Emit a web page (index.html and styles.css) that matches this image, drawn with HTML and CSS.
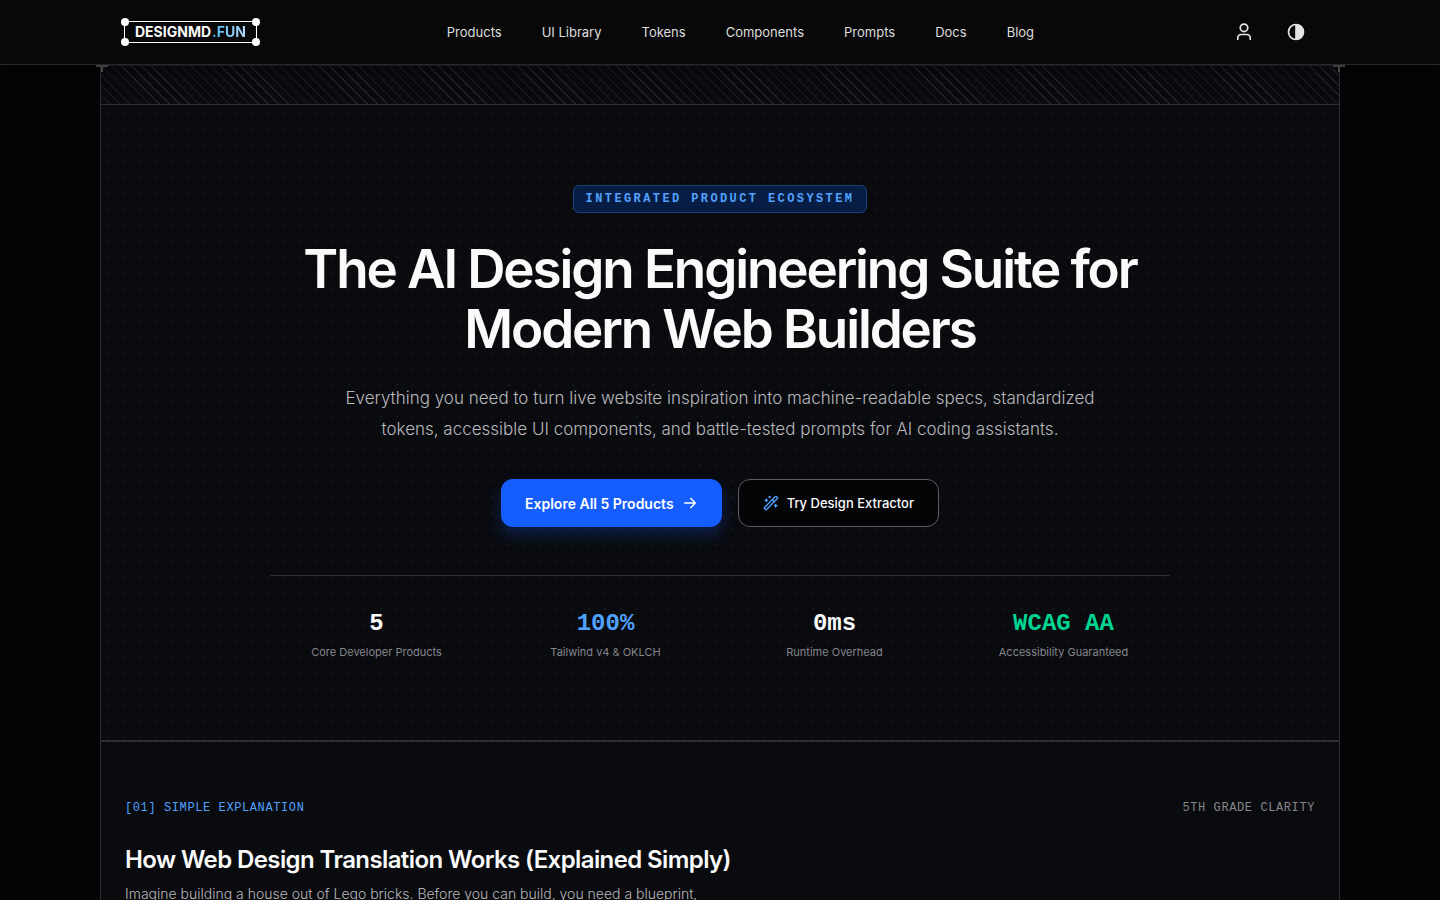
FILE: index.html
```html
<!DOCTYPE html>
<html lang="en">
  <head>
    <meta charset="UTF-8" />
    <meta name="viewport" content="width=device-width, initial-scale=1" />
    <title>DesignMD.fun - Products</title>
    <link rel="stylesheet" href="styles.css">
  </head>
  <body>
    <header class="header">
      <div class="header-inner">
        <a href="#" class="logo">
          <span class="logo-name">DESIGNMD</span><span class="logo-tld">.FUN</span>
          <i class="handle top-left"></i>
          <i class="handle top-right"></i>
          <i class="handle bottom-left"></i>
          <i class="handle bottom-right"></i>
        </a>
        <nav class="nav">
          <a href="#">Products</a>
          <a href="#">UI Library</a>
          <a href="#">Tokens</a>
          <a href="#">Components</a>
          <a href="#">Prompts</a>
          <a href="#">Docs</a>
          <a href="#">Blog</a>
        </nav>
        <div class="actions">
          <button type="button" class="icon-btn" aria-label="Account">
            <svg width="20" height="20" viewBox="0 0 24 24" fill="none" stroke="currentColor" stroke-width="2" stroke-linecap="round" stroke-linejoin="round">
              <circle cx="12" cy="7" r="4.5" />
              <path d="M4.5 21v-2a4 4 0 0 1 4-4h7a4 4 0 0 1 4 4v2" />
            </svg>
          </button>
          <button type="button" class="icon-btn" aria-label="Theme">
            <svg width="20" height="20" viewBox="0 0 24 24" fill="none" stroke="currentColor" stroke-width="2">
              <circle cx="12" cy="12" r="9" />
              <path d="M11 3h1a9 9 0 0 1 0 18h-1z" fill="currentColor" stroke="none" />
            </svg>
          </button>
        </div>
      </div>
    </header>

    <main class="frame">
      <i class="cross cross-left"></i>
      <i class="cross cross-right"></i>
      <div class="hatch"></div>

      <section class="hero">
        <span class="badge">INTEGRATED PRODUCT ECOSYSTEM</span>
        <h1>The AI Design Engineering Suite for Modern Web Builders</h1>
        <p class="lead">Everything you need to turn live website inspiration into machine-readable specs, standardized tokens, accessible UI components, and battle-tested prompts for AI coding assistants.</p>
        <div class="buttons">
          <a href="#" class="btn btn-primary">
            Explore All 5 Products
            <svg width="16" height="16" viewBox="0 0 24 24" fill="none" stroke="currentColor" stroke-width="2" stroke-linecap="round" stroke-linejoin="round">
              <path d="M4 12h16M13 5l7 7-7 7" />
            </svg>
          </a>
          <a href="#" class="btn btn-outline">
            <svg width="16" height="16" viewBox="0 0 24 24" fill="none" stroke="currentColor" stroke-width="2" stroke-linecap="round" stroke-linejoin="round">
              <path d="m21.640 3.640-1.280-1.280a1.210 1.210 0 0 0-1.720 0L2.360 18.640a1.210 1.210 0 0 0 0 1.720l1.280 1.280a1.200 1.200 0 0 0 1.720 0L21.640 5.360a1.200 1.200 0 0 0 0-1.720" />
              <path d="m14 7 3 3M5 6v4M19 14v4M10 2v2M7 8H3M21 16h-4M11 3H9" />
            </svg>
            Try Design Extractor
          </a>
        </div>
        <div class="stats">
          <div class="stat">
            <strong>5</strong>
            <span>Core Developer Products</span>
          </div>
          <div class="stat">
            <strong class="blue">100%</strong>
            <span>Tailwind v4 &amp; OKLCH</span>
          </div>
          <div class="stat">
            <strong>0ms</strong>
            <span>Runtime Overhead</span>
          </div>
          <div class="stat">
            <strong class="green">WCAG AA</strong>
            <span>Accessibility Guaranteed</span>
          </div>
        </div>
      </section>

      <section class="explain">
        <div class="explain-top">
          <span class="blue">[01] SIMPLE EXPLANATION</span>
          <span class="note">5TH GRADE CLARITY</span>
        </div>
        <h2>How Web Design Translation Works (Explained Simply)</h2>
        <p>Imagine building a house out of Lego bricks. Before you can build, you need a blueprint,</p>
      </section>
    </main>
  </body>
</html>
```

FILE: styles.css
```css
* {
  box-sizing: border-box;
}

body {
  margin: 0;
  height: 100vh;
  overflow: hidden;
  font-family: Inter, sans-serif;
  background-color: #030507;
  color: #fafafa;
}

a {
  color: inherit;
  text-decoration: none;
}

h1,
h2,
p {
  margin: 0;
}

/* Header */
.header {
  position: relative;
  z-index: 2;
  background: #080808;
  border-bottom: 1px solid #262729;
  box-shadow: 0 4px 20px rgba(0, 0, 0, 0.5);
}

.header-inner {
  max-width: 1240px;
  height: 64px;
  margin: 0 auto;
  padding: 0 24px;
  display: flex;
  align-items: center;
  justify-content: space-between;
}

.logo {
  position: relative;
  display: flex;
  gap: 1px;
  padding: 0 10px;
  border: 1px solid #fff;
  font-size: 14px;
  line-height: 20px;
  font-weight: 700;
}

.logo-tld {
  background: linear-gradient(90deg, #4cc0f8, #b4d8fc);
  background-clip: text;
  -webkit-background-clip: text;
  color: transparent;
}

.handle {
  position: absolute;
  width: 8px;
  height: 8px;
  border-radius: 50%;
  background: #fff;
}

.top-left {
  top: -4px;
  left: -4px;
}

.top-right {
  top: -4px;
  right: -4px;
}

.bottom-left {
  bottom: -4px;
  left: -4px;
}

.bottom-right {
  bottom: -4px;
  right: -4px;
}

.nav {
  display: flex;
  gap: 40px;
  font-size: 13px;
  line-height: 20px;
  color: #dededf;
}

.actions {
  display: flex;
  gap: 12px;
}

.icon-btn {
  display: flex;
  align-items: center;
  justify-content: center;
  width: 40px;
  height: 40px;
  padding: 0;
  border: 0;
  background: none;
  color: #e4e4e7;
}

/* Page frame */
.frame {
  position: relative;
  max-width: 1240px;
  margin: 0 auto;
  background: #0a0b0f;
  border-left: 1px solid #2c2d30;
  border-right: 1px solid #2c2d30;
}

.cross {
  position: absolute;
  top: -5px;
  width: 12px;
  height: 12px;
  background:
    linear-gradient(#5c5d60, #5c5d60) center / 12px 2px no-repeat,
    linear-gradient(#5c5d60, #5c5d60) center / 2px 12px no-repeat;
}

.cross-left {
  left: -5px;
}

.cross-right {
  right: -6px;
}

.hatch {
  height: 40px;
  border-top: 1px solid #26272a;
  border-bottom: 1px solid #2c2d30;
  background: repeating-linear-gradient(45deg, transparent 0, transparent 6px, #222326 6px, #222326 7px);
}

/* Hero */
.hero {
  display: flex;
  flex-direction: column;
  align-items: center;
  padding: 80px 24px;
  text-align: center;
  border-bottom: 2px solid #2c2d30;
  background: radial-gradient(circle, #17181c 1px, transparent 1px) 0 0 / 16px 16px;
}

.badge {
  padding: 0 12px;
  border: 1px solid #1c3f80;
  border-radius: 6px;
  background: #071d43;
  color: #51a2ff;
  font-family: "Liberation Mono", monospace;
  font-size: 12px;
  line-height: 26px;
  font-weight: 700;
  letter-spacing: 0.2em;
}

h1 {
  max-width: 900px;
  margin-top: 26px;
  font-size: 53px;
  line-height: 60px;
  font-weight: 600;
  letter-spacing: -0.04em;
}

.lead {
  max-width: 768px;
  margin-top: 24px;
  font-size: 17px;
  line-height: 31px;
  font-weight: 300;
  color: #b8b8bc;
}

.buttons {
  display: flex;
  gap: 16px;
  margin-top: 34px;
}

.btn {
  display: flex;
  align-items: center;
  gap: 8px;
  height: 48px;
  padding: 0 24px;
  border-radius: 12px;
}

.btn-primary {
  background: #155dfc;
  color: #fff;
  font-size: 14px;
  font-weight: 600;
  box-shadow: 0 8px 16px rgba(21, 93, 252, 0.25);
}

.btn-outline {
  border: 1px solid #5c5d60;
  background: #040507;
  font-size: 13px;
  font-weight: 500;
}

.btn-outline svg {
  color: #51a2ff;
}

.stats {
  display: grid;
  grid-template-columns: repeat(4, 1fr);
  gap: 16px;
  width: 100%;
  max-width: 900px;
  margin-top: 48px;
  padding-top: 32px;
  border-top: 1px solid #2c2d30;
}

.stat {
  display: flex;
  flex-direction: column;
  gap: 4px;
}

.stat strong {
  font-family: "Liberation Mono", monospace;
  font-size: 24px;
  line-height: 32px;
}

.stat span {
  font-size: 11px;
  line-height: 16px;
  color: #85858b;
}

.blue {
  color: #51a2ff;
}

.green {
  color: #00d492;
}

/* Explanation */
.explain {
  padding: 58px 24px;
}

.explain-top {
  display: flex;
  justify-content: space-between;
  font-family: "Liberation Mono", monospace;
  font-size: 12px;
  line-height: 16px;
  letter-spacing: 0.05em;
}

.note {
  color: #85858b;
}

h2 {
  margin-top: 28px;
  font-size: 24px;
  line-height: 32px;
  font-weight: 600;
  letter-spacing: -0.025em;
}

.explain p {
  margin-top: 6px;
  font-size: 14px;
  line-height: 24px;
  font-weight: 300;
  color: #b8b8bc;
}
```
